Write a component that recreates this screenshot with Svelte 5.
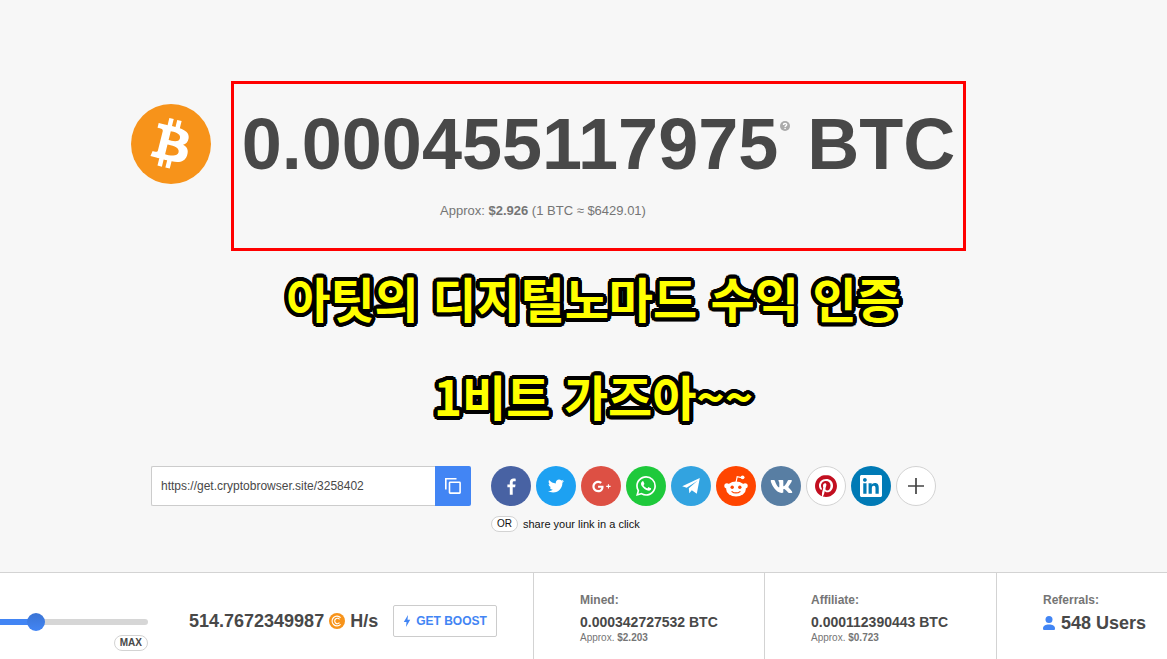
<script>
  let link = $state('https://get.cryptobrowser.site/3258402');
  let speed = $state(21);

  const networks = [
    {
      name: 'Facebook', color: '#4862a3', box: '0 0 24 24', size: 17,
      path: 'M13.700 23.500V13.200h3.400l.6-4.100h-4V6.600c0-1.200.4-2 2.100-2h2.100V.9C17.500.8 16.300.7 15 .7c-3.200 0-5.400 1.900-5.400 5.400v3H6.200v4.100h3.400v10.300z'
    },
    {
      name: 'Twitter', color: '#1da1f2', box: '0 0 24 24', size: 16,
      path: 'M23.954 4.569c-.885.389-1.83.654-2.825.775 1.014-.611 1.794-1.574 2.163-2.723-.951.555-2.005.959-3.127 1.184-.896-.959-2.173-1.559-3.591-1.559-2.717 0-4.92 2.203-4.92 4.917 0 .39.045.765.127 1.124C7.691 8.094 4.066 6.13 1.64 3.161c-.427.722-.666 1.561-.666 2.475 0 1.71.87 3.213 2.188 4.096-.807-.026-1.566-.248-2.228-.616v.061c0 2.385 1.693 4.374 3.946 4.827-.413.111-.849.171-1.296.171-.314 0-.615-.03-.916-.086.631 1.953 2.445 3.377 4.604 3.417-1.68 1.319-3.809 2.105-6.102 2.105-.39 0-.779-.023-1.17-.067 2.189 1.394 4.768 2.209 7.557 2.209 9.054 0 13.999-7.496 13.999-13.986 0-.209 0-.42-.015-.63.961-.689 1.8-1.56 2.46-2.548l-.047-.02z'
    },
    {
      name: 'Google Plus', color: '#dd5044', box: '0 -64 640 640', size: 19,
      path: 'M386.061 228.496c1.834 9.692 3.143 19.384 3.143 31.956C389.204 370.205 315.599 448 204.8 448c-106.084 0-192-85.915-192-192s85.916-192 192-192c51.864 0 95.083 18.859 128.611 50.292l-52.126 50.03c-14.145-13.621-39.028-29.599-76.485-29.599-65.484 0-118.92 54.221-118.92 121.277 0 67.056 53.436 121.277 118.92 121.277 75.961 0 104.513-54.745 108.965-82.773H204.8v-66.009h181.261zm185.406 6.437V179.2h-36.001v55.733h-55.733v36.001h55.733v55.733h36.001v-55.733H627.2v-36.001h-55.733z'
    },
    {
      name: 'WhatsApp', color: '#1ec93b', box: '0 0 24 24', size: 20,
      path: 'M17.472 14.382c-.297-.149-1.758-.867-2.03-.967-.273-.099-.471-.148-.67.15-.197.297-.767.966-.94 1.164-.173.199-.347.223-.644.075-.297-.15-1.255-.463-2.39-1.475-.883-.788-1.48-1.761-1.653-2.059-.173-.297-.018-.458.13-.606.134-.133.298-.347.446-.52.149-.174.198-.298.298-.497.099-.198.05-.371-.025-.52-.075-.149-.669-1.612-.916-2.207-.242-.579-.487-.5-.669-.51-.173-.008-.371-.01-.57-.01-.198 0-.52.074-.792.372-.272.297-1.04 1.016-1.04 2.479 0 1.462 1.065 2.875 1.213 3.074.149.198 2.096 3.2 5.077 4.487.709.306 1.262.489 1.694.625.712.227 1.36.195 1.871.118.571-.085 1.758-.719 2.006-1.413.248-.694.248-1.289.173-1.413-.074-.124-.272-.198-.57-.347m-5.421 7.403h-.004a9.87 9.87 0 01-5.031-1.378l-.361-.214-3.741.982.998-3.648-.235-.374a9.86 9.86 0 01-1.51-5.26c.001-5.45 4.436-9.884 9.888-9.884 2.64 0 5.122 1.03 6.988 2.898a9.825 9.825 0 012.893 6.994c-.003 5.45-4.437 9.884-9.885 9.884m8.413-18.297A11.815 11.815 0 0012.05 0C5.495 0 .16 5.335.157 11.892c0 2.096.547 4.142 1.588 5.945L.057 24l6.305-1.654a11.882 11.882 0 005.683 1.448h.005c6.554 0 11.89-5.335 11.893-11.893a11.821 11.821 0 00-3.48-8.413Z'
    },
    {
      name: 'Telegram', color: '#32a3e0', box: '0 0 20 20', size: 20,
      path: 'M1.200 10.300 18.800 2 15.800 17.700 10.800 14.200 8.300 17.200 7.800 12.300 16.500 4.800 5.700 11.700z'
    },
    { name: 'Reddit', color: '#ff4500', box: '0 0 26 24', size: 26 },
    {
      name: 'VK', color: '#587ea3', box: '0 0 576 512', size: 23,
      path: 'M545 117.7c3.7-12.5 0-21.7-17.8-21.7h-58.9c-15 0-21.900 7.900-25.600 16.700 0 0-30 73.100-72.400 120.500-13.700 13.700-20 18.100-27.500 18.100-3.700 0-9.400-4.400-9.400-16.900V117.700c0-15-4.200-21.700-16.600-21.700h-92.600c-9.400 0-15 7-15 13.500 0 14.200 21.200 17.500 23.400 57.500v86.800c0 19-3.400 22.500-10.900 22.500-20 0-68.600-73.400-97.400-157.400-5.800-16.300-11.500-22.900-26.600-22.900H38.800c-16.800 0-20.200 7.900-20.200 16.700 0 15.600 20 93.100 93.100 195.500C160.400 378.100 229 416 291.400 416c37.500 0 42.100-8.400 42.100-22.900 0-66.800-3.400-73.100 15.400-73.100 8.700 0 23.700 4.400 58.700 38.100 40 40 46.600 57.900 69 57.900h58.900c16.800 0 25.300-8.400 20.400-25-11.200-34.900-86.900-106.700-90.300-111.500-8.700-11.200-6.200-16.200 0-26.200.1-.1 72-101.300 79.400-135.600z'
    },
    {
      name: 'Pinterest', color: '#fff', ink: '#c20f20', outlined: true, box: '0 0 24 24', size: 22,
      path: 'M12.017 0C5.396 0 .029 5.367.029 11.987c0 5.079 3.158 9.417 7.618 11.162-.105-.949-.199-2.403.041-3.439.219-.937 1.406-5.957 1.406-5.957s-.359-.72-.359-1.781c0-1.663.967-2.911 2.168-2.911 1.024 0 1.518.769 1.518 1.688 0 1.029-.653 2.567-.992 3.992-.285 1.193.6 2.165 1.775 2.165 2.128 0 3.768-2.245 3.768-5.487 0-2.861-2.063-4.869-5.008-4.869-3.41 0-5.409 2.562-5.409 5.199 0 1.033.394 2.143.889 2.741.099.12.112.225.085.345-.09.375-.293 1.199-.334 1.363-.053.225-.172.271-.401.165-1.495-.69-2.433-2.878-2.433-4.646 0-3.776 2.748-7.252 7.92-7.252 4.158 0 7.392 2.967 7.392 6.923 0 4.135-2.607 7.462-6.233 7.462-1.214 0-2.354-.629-2.758-1.379l-.749 2.848c-.269 1.045-1.004 2.352-1.498 3.146 1.123.345 2.306.535 3.55.535 6.607 0 11.985-5.365 11.985-11.987C23.97 5.39 18.592.026 11.985.026L12.017 0z'
    },
    {
      name: 'LinkedIn', color: '#007ab5', box: '0 0 24 24', size: 22,
      path: 'M20.447 20.452h-3.554v-5.569c0-1.328-.027-3.037-1.852-3.037-1.853 0-2.136 1.445-2.136 2.939v5.667H9.351V9h3.414v1.561h.046c.477-.9 1.637-1.85 3.37-1.85 3.601 0 4.267 2.37 4.267 5.455v6.286zM5.337 7.433c-1.144 0-2.063-.926-2.063-2.065 0-1.138.92-2.063 2.063-2.063 1.14 0 2.064.925 2.064 2.063 0 1.139-.925 2.065-2.064 2.065zm1.782 13.019H3.555V9h3.564v11.452zM22.225 0H1.771C.792 0 0 .774 0 1.729v20.542C0 23.227.792 24 1.771 24h20.451C23.2 24 24 23.227 24 22.271V1.729C24 .774 23.2 0 22.222 0h.003z'
    }
  ];

  const earnings = [
    { label: 'Mined:', amount: '0.000342727532 BTC', approx: '$2.203' },
    { label: 'Affiliate:', amount: '0.000112390443 BTC', approx: '$0.723' }
  ];
</script>

<div class="page">
  <main>
    <section class="balance">
      <svg class="coin" viewBox="0 0 64 64" aria-hidden="true">
        <circle cx="32" cy="32" r="32" fill="#f7931a" />
        <path fill="#fff" d="m46.103,27.444c0.637-4.258-2.605-6.547-7.038-8.074l1.438-5.768-3.511-0.875-1.4,5.616c-0.923-0.23-1.871-0.447-2.813-0.662l1.41-5.653-3.509-0.875-1.439,5.766c-0.764-0.174-1.514-0.346-2.242-0.527l0.004-0.018-4.842-1.209-0.934,3.75s2.605,0.597,2.55,0.634c1.422,0.355,1.679,1.296,1.636,2.042l-1.638,6.571c0.098,0.025,0.225,0.061,0.365,0.117-0.117-0.029-0.242-0.061-0.371-0.092l-2.296,9.205c-0.174,0.432-0.615,1.08-1.609,0.834,0.035,0.051-2.552-0.637-2.552-0.637l-1.743,4.019,4.569,1.139c0.85,0.213,1.683,0.436,2.503,0.646l-1.453,5.834,3.507,0.875,1.439-5.772c0.958,0.26,1.888,0.5,2.798,0.726l-1.434,5.745,3.511,0.875,1.453-5.823c5.987,1.133,10.489,0.676,12.384-4.739,1.527-4.36-0.076-6.875-3.226-8.515,2.294-0.529,4.022-2.038,4.483-5.155zm-8.022,11.249c-1.085,4.36-8.426,2.003-10.806,1.412l1.928-7.729c2.38,0.594,10.012,1.77,8.878,6.317zm1.086-11.312c-0.99,3.966-7.1,1.951-9.082,1.457l1.748-7.01c1.982,0.494,8.365,1.416,7.334,5.553z" />
      </svg>
      <div class="frame">
        <h1>
          <span>0.000455117975</span>
          <svg class="help" viewBox="0 0 10 10" aria-hidden="true">
            <circle cx="5" cy="5" r="5" fill="#aaa" />
            <path d="M3.400 3.900C3.400 2 6.700 2 6.700 3.800 6.700 4.900 5.100 4.800 5.100 6" fill="none" stroke="#fff" stroke-width="1.400" />
            <rect x="4.400" y="6.800" width="1.400" height="1.300" fill="#fff" />
          </svg>
          <span>BTC</span>
        </h1>
        <p class="approx">Approx: <b>$2.926</b> (1 BTC ≈ $6429.01)</p>
      </div>
    </section>

    <section class="captions" lang="ko">
      <p>아팃의 디지털노마드 수익 인증</p>
      <p>1비트 가즈아~~</p>
    </section>

    <section class="share">
      <div class="copy">
        <input type="text" aria-label="Referral link" bind:value={link} />
        <button type="button" aria-label="Copy link">
          <svg viewBox="0 0 16 16" width="16" height="16" fill="none" stroke="#fff" stroke-width="1.600">
            <path d="M.8 11.500V.8H11.500" />
            <rect x="4.500" y="4.300" width="10.600" height="10.800" rx=".6" />
          </svg>
        </button>
      </div>
      <div class="social">
        <nav aria-label="Share">
          {#each networks as n}
            <a href="#share" aria-label={n.name} class:outlined={n.outlined} style:background={n.color}>
              <svg viewBox={n.box} width={n.size} height={n.size} fill={n.ink ?? '#fff'}>
                {#if n.path}
                  <path d={n.path} />
                {:else}
                  <path d="M13 8.500 14.200 2.600 18.500 3.600" fill="none" stroke="#fff" stroke-width="1.200" />
                  <circle cx="19.600" cy="3.300" r="1.900" />
                  <circle cx="3.900" cy="11.800" r="2.600" />
                  <circle cx="22.100" cy="11.800" r="2.600" />
                  <ellipse cx="13" cy="15" rx="9.900" ry="7.400" />
                  <circle cx="9.200" cy="13.300" r="1.700" fill="#ff4500" />
                  <circle cx="16.800" cy="13.300" r="1.700" fill="#ff4500" />
                  <path d="M9 17.600c2 1.800 6 1.800 8 0" fill="none" stroke="#ff4500" stroke-width="1.200" stroke-linecap="round" />
                {/if}
              </svg>
            </a>
          {/each}
          <a href="#more" aria-label="More" class="outlined more">
            <svg viewBox="0 0 16 16" width="16" height="16"><path d="M8 0v16M0 8h16" stroke="#444" stroke-width="1.700" /></svg>
          </a>
        </nav>
        <p class="hint"><span class="pill">OR</span>share your link in a click</p>
      </div>
    </section>
  </main>

  <footer>
    <div class="cell mining">
      <div class="slider">
        <input type="range" min="0" max="100" aria-label="Mining speed" bind:value={speed} style:--fill="{speed}%" />
        <button type="button" class="pill max">MAX</button>
      </div>
      <div class="rate">
        <span>514.7672349987</span>
        <svg viewBox="0 0 16 16" width="16" height="16" aria-hidden="true">
          <circle cx="8" cy="8" r="8" fill="#f7931a" />
          <path d="M11.600 4.700A4.900 4.900 0 1 0 11.600 11.300M10.500 6.300A2.700 2.700 0 1 0 10.500 9.700" fill="none" stroke="#fff" stroke-width="1.100" />
        </svg>
        <span>H/s</span>
      </div>
      <button type="button" class="boost">
        <svg viewBox="0 0 8 12" width="8" height="12" aria-hidden="true"><path d="M5 0 .8 7h2.700L3 12 7.200 4.800H4.500z" fill="#4285f4" /></svg>
        GET BOOST
      </button>
    </div>
    {#each earnings as e}
      <div class="cell stat">
        <h2>{e.label}</h2>
        <strong>{e.amount}</strong>
        <small>Approx. <b>{e.approx}</b></small>
      </div>
    {/each}
    <div class="cell stat">
      <h2>Referrals:</h2>
      <div class="users">
        <svg viewBox="0 0 12 14" width="12" height="14" aria-hidden="true" fill="#4285f4">
          <circle cx="6" cy="3.500" r="3.500" />
          <path d="M0 12.500C0 9.800 2.500 8.500 6 8.500s6 1.300 6 4c0 1-.5 1.500-1.500 1.500h-9C.5 14 0 13.500 0 12.500z" />
        </svg>
        548 Users
      </div>
    </div>
  </footer>
</div>

<style>
  :global(body) {
    background: #f7f7f7;
  }
  .page {
    min-height: 100vh;
    display: flex;
    flex-direction: column;
    overflow: hidden;
    font-family: "Liberation Sans", Arial, sans-serif;
    font-size: 12px;
    color: #484848;
  }
  .page * {
    box-sizing: border-box;
  }
  h1, h2, p {
    margin: 0;
  }
  button, input {
    font: inherit;
    color: inherit;
  }
  main {
    flex: 1;
    padding: 81px 0 30px;
  }

  .balance {
    display: flex;
    justify-content: center;
    gap: 20px;
    padding-right: 70px;
  }
  .coin {
    width: 80px;
    height: 80px;
    margin-top: 23px;
    flex: none;
  }
  .frame {
    border: 3px solid #f00;
    padding: 20px 8px 28px;
  }
  h1 {
    display: flex;
    font-size: 72px;
    line-height: 80px;
    font-weight: 700;
    white-space: nowrap;
  }
  .help {
    width: 10px;
    height: 10px;
    margin: 17px 17px 0 2px;
  }
  .approx {
    margin-top: 18px;
    padding-right: 111px;
    text-align: center;
    font-size: 13px;
    line-height: 18px;
    color: #757575;
  }

  .captions {
    display: flex;
    flex-direction: column;
    gap: 32px;
    margin-top: 13px;
    padding-left: 20px;
    text-align: center;
    font-family: "Noto Sans CJK KR", sans-serif;
    font-weight: 700;
    font-size: 48px;
    line-height: 66px;
    color: #ff0;
    text-shadow:
      4px 0 #000, -4px 0 #000, 0 4px #000, 0 -4px #000,
      4px 1px #000, 4px -1px #000, -4px 1px #000, -4px -1px #000,
      1px 4px #000, 1px -4px #000, -1px 4px #000, -1px -4px #000,
      3px 2px #000, 3px -2px #000, -3px 2px #000, -3px -2px #000,
      2px 3px #000, 2px -3px #000, -2px 3px #000, -2px -3px #000,
      3px 3px #000, 3px -3px #000, -3px 3px #000, -3px -3px #000,
      2px 0 #000, -2px 0 #000, 0 2px #000, 0 -2px #000;
  }

  .share {
    display: flex;
    justify-content: center;
    gap: 20px;
    margin-top: 38px;
    padding-right: 80px;
  }
  .copy {
    display: flex;
    height: 40px;
    width: 320px;
  }
  .copy input {
    flex: 1;
    min-width: 0;
    padding: 0 9px;
    border: 1px solid #ccc;
    border-right: 0;
    border-radius: 2px 0 0 2px;
    background: #fff;
  }
  .copy button {
    display: grid;
    place-items: center;
    width: 36px;
    padding: 0;
    border: 0;
    border-radius: 0 2px 2px 0;
    background: #4285f4;
  }
  nav {
    display: flex;
    gap: 5px;
  }
  nav a {
    display: grid;
    place-items: center;
    width: 40px;
    height: 40px;
    border-radius: 50%;
  }
  .outlined {
    border: 1px solid #d3d3d3;
  }
  .more {
    background: #fff;
  }
  .hint {
    display: flex;
    align-items: center;
    gap: 5px;
    margin-top: 10px;
    font-size: 11px;
    color: #111;
  }
  .pill {
    padding: 0 5px;
    border: 1px solid #d3d3d3;
    border-radius: 9px;
    background: #fff;
    font-size: 10px;
    line-height: 14px;
  }

  footer {
    display: grid;
    grid-template-columns: 534fr 231fr 232fr 170fr;
    min-height: 87px;
    border-top: 1px solid #d3d3d3;
    background: #fff;
  }
  .cell + .cell {
    border-left: 1px solid #d3d3d3;
    margin-left: -1px;
  }
  .mining {
    display: flex;
    align-items: flex-start;
    padding-top: 32px;
  }
  .slider {
    display: flex;
    flex-direction: column;
    align-items: flex-end;
    gap: 4px;
    width: 148px;
    margin: 8px 41px 0 0;
  }
  .slider input {
    appearance: none;
    width: 100%;
    height: 18px;
    margin: 0;
    background: none;
  }
  .slider input::-webkit-slider-runnable-track {
    height: 6px;
    border-radius: 0 3px 3px 0;
    background: linear-gradient(to right, #4285f4 var(--fill), #d6d6d6 var(--fill));
  }
  .slider input::-webkit-slider-thumb {
    appearance: none;
    width: 18px;
    height: 18px;
    margin-top: -6px;
    border-radius: 50%;
    background: linear-gradient(#3b74d4, #4285f4);
  }
  .max {
    font-weight: 700;
  }
  .rate {
    display: flex;
    align-items: center;
    gap: 5px;
    height: 32px;
    margin-right: 15px;
    font-size: 18px;
    font-weight: 700;
  }
  .boost {
    display: flex;
    align-items: center;
    gap: 5px;
    height: 32px;
    padding: 0 9px;
    border: 1px solid #ccc;
    border-radius: 2px;
    background: #fff;
    color: #4285f4;
    font-weight: 700;
    white-space: nowrap;
  }
  .stat {
    padding: 20px 0 0 46px;
    white-space: nowrap;
  }
  h2 {
    font-size: 12px;
    line-height: 14px;
    color: #757575;
  }
  .stat strong {
    display: block;
    margin-top: 7px;
    font-size: 14px;
    line-height: 16px;
  }
  .stat small {
    display: block;
    font-size: 10px;
    line-height: 16px;
    color: #757575;
  }
  .users {
    display: flex;
    align-items: center;
    gap: 6px;
    margin-top: 6px;
    font-size: 18px;
    line-height: 20px;
    font-weight: 700;
  }
</style>
